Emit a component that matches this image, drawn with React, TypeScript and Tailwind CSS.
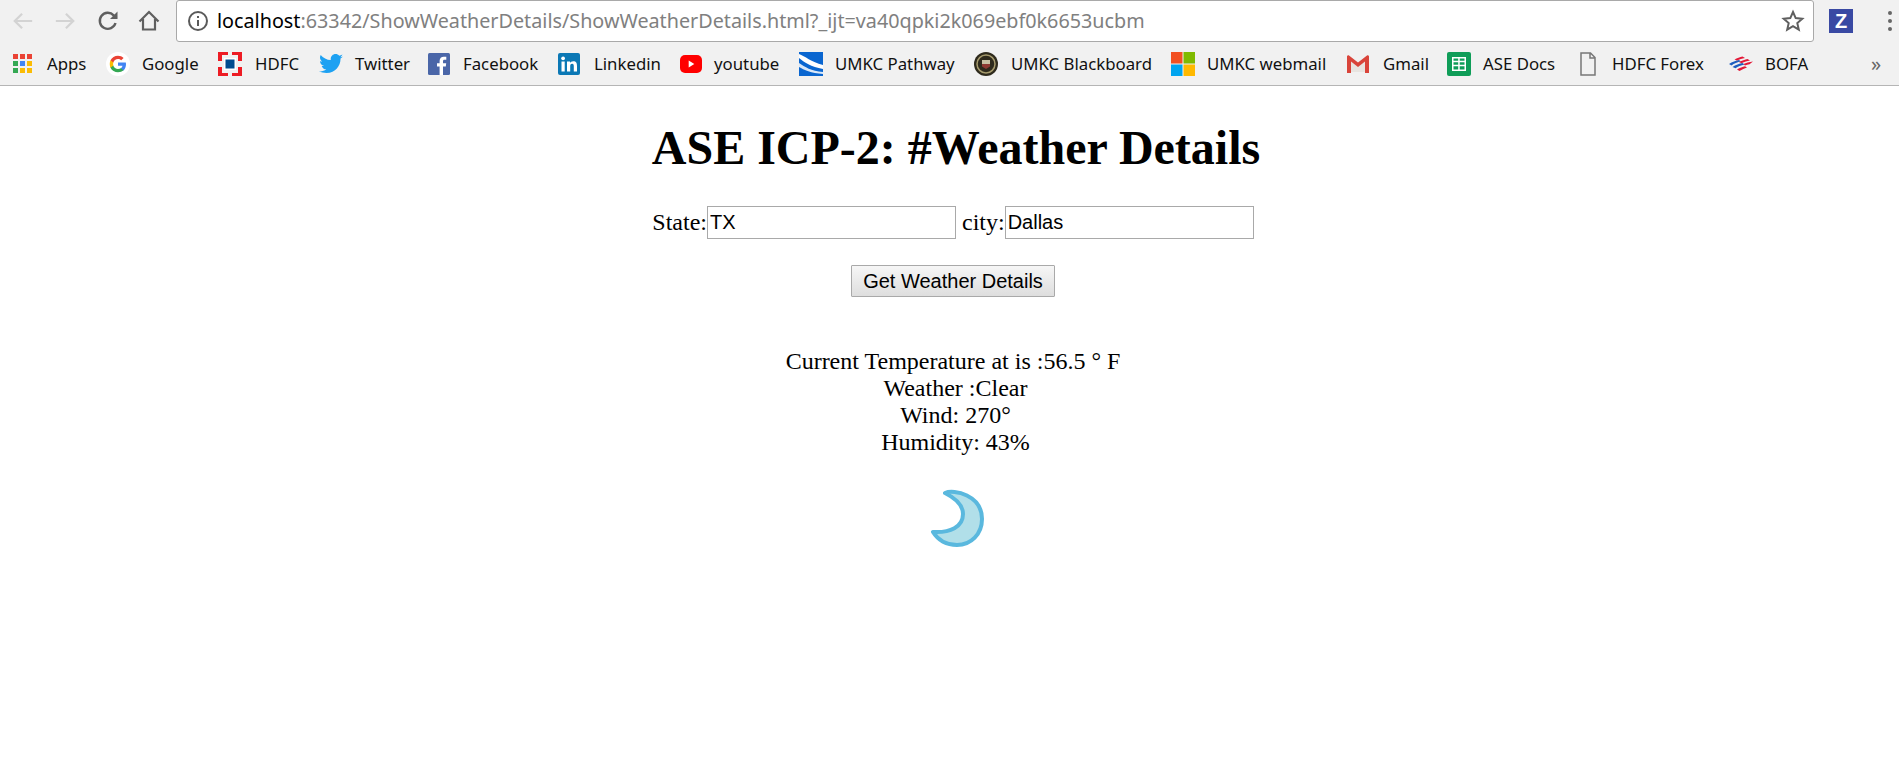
import type { ReactNode } from "react";

type Bookmark = { label: string; icon: ReactNode; itemClass: string; boxClass: string };

const AppsIcon = () => (
  <svg width="20" height="20" viewBox="0 0 20 20">
    <rect x="0" y="0" width="5" height="5" fill="#ea4335" />
    <rect x="7" y="0" width="5" height="5" fill="#ea4335" />
    <rect x="14" y="0" width="5" height="5" fill="#ea4335" />
    <rect x="0" y="7" width="5" height="5" fill="#34a853" />
    <rect x="7" y="7" width="5" height="5" fill="#4285f4" />
    <rect x="14" y="7" width="5" height="5" fill="#fbbc05" />
    <rect x="0" y="14" width="5" height="5" fill="#34a853" />
    <rect x="7" y="14" width="5" height="5" fill="#fbbc05" />
    <rect x="14" y="14" width="5" height="5" fill="#fbbc05" />
  </svg>
);

const GoogleIcon = () => (
  <svg width="24" height="24" viewBox="0 0 24 24">
    <circle cx="12" cy="12" r="12" fill="#fff" />
    <path d="M20 12.200c0-.6-.1-1.200-.2-1.700H12v3.300h4.500c-.2 1-.8 1.900-1.700 2.500v2.100h2.700c1.600-1.500 2.500-3.600 2.500-6.200z" fill="#4285f4" />
    <path d="M12 20.300c2.300 0 4.200-.8 5.500-2l-2.700-2.100c-.7.500-1.700.8-2.800.8-2.200 0-4.100-1.500-4.700-3.500H4.500v2.200c1.400 2.800 4.200 4.600 7.500 4.600z" fill="#34a853" />
    <path d="M7.300 13.500c-.3-1-.3-2.100 0-3.100V8.200H4.500c-1 1.900-1 5.600 0 7.500l2.800-2.200z" fill="#fbbc05" />
    <path d="M12 7c1.200 0 2.300.4 3.200 1.300l2.400-2.400C16.100 4.500 14.200 3.700 12 3.700c-3.300 0-6.100 1.800-7.500 4.500l2.800 2.200C7.900 8.500 9.800 7 12 7z" fill="#ea4335" />
  </svg>
);

const HdfcIcon = () => (
  <svg width="24" height="24" viewBox="0 0 24 24">
    <path d="M0 0h10v3H4v6H0zM14 0h10v9h-4V3h-6zM0 15h4v6h6v3H0zM20 15h4v9H14v-3h6z" fill="#ed1c24" />
    <rect x="6" y="6" width="12" height="12" fill="#fff" />
    <rect x="7.500" y="7.500" width="9" height="9" fill="#004c8f" />
  </svg>
);

const TwitterIcon = () => (
  <svg width="24" height="20" viewBox="0 0 24 20">
    <path d="M24 2.400c-.9.400-1.800.700-2.800.800 1-.6 1.800-1.600 2.200-2.700-1 .6-2 1-3.100 1.200C19.300.6 18 0 16.600 0c-2.700 0-4.900 2.200-4.900 4.900 0 .4 0 .8.100 1.100C7.700 5.800 4.100 3.900 1.700.9c-.4.700-.7 1.600-.7 2.500 0 1.700.9 3.200 2.200 4.100-.8 0-1.600-.2-2.200-.6v.1c0 2.400 1.700 4.400 3.900 4.800-.4.100-.8.200-1.300.2-.3 0-.6 0-.9-.1.600 2 2.400 3.400 4.600 3.400-1.700 1.300-3.800 2.100-6.100 2.100-.4 0-.8 0-1.200-.1C2.200 18.200 4.800 19 7.500 19c9.100 0 14-7.500 14-14v-.6c1-.7 1.800-1.500 2.500-2z" fill="#1da1f2" />
  </svg>
);

const FacebookIcon = () => (
  <svg width="22" height="22" viewBox="0 0 22 22">
    <rect width="22" height="22" rx="1.500" fill="#4a66a8" />
    <path d="M15 22v-8.500h2.800l.4-3.300H15V8.300c0-1 .3-1.600 1.600-1.600h1.700V3.800c-.3 0-1.300-.1-2.500-.1-2.500 0-4.200 1.500-4.200 4.300v2.200H9v3.300h2.600V22z" fill="#fff" />
  </svg>
);

const LinkedinIcon = () => (
  <svg width="22" height="22" viewBox="0 0 22 22">
    <rect width="22" height="22" rx="2" fill="#0b78b5" />
    <rect x="3.500" y="8.500" width="3.200" height="10" fill="#fff" />
    <circle cx="5.100" cy="5.300" r="1.900" fill="#fff" />
    <path d="M9 8.500h3v1.400c.5-.9 1.600-1.700 3.200-1.700 3.100 0 3.800 2 3.800 4.700v5.600h-3.200v-5c0-1.200 0-2.700-1.700-2.700s-1.900 1.300-1.900 2.600v5.100H9z" fill="#fff" />
  </svg>
);

const YoutubeIcon = () => (
  <svg width="22" height="18" viewBox="0 0 22 18">
    <rect width="22" height="18" rx="5" fill="#f00" />
    <path d="M8.700 5.500v7l5.600-3.500z" fill="#fff" />
  </svg>
);

const PathwayIcon = () => (
  <svg width="24" height="24" viewBox="0 0 24 24">
    <rect width="24" height="24" fill="#0a66d0" />
    <path d="M0 2c6 2 12 8 24 11v4C12 15 5 10 0 6z" fill="#fff" />
    <path d="M0 11c6 4 12 8 24 9v2C12 21 5 18 0 15z" fill="#fff" opacity="0.85" />
  </svg>
);

const BlackboardIcon = () => (
  <svg width="24" height="24" viewBox="0 0 24 24">
    <circle cx="12" cy="12" r="12" fill="#2e2a1c" />
    <circle cx="12" cy="12" r="9" fill="none" stroke="#a59a6c" strokeWidth="1.500" />
    <rect x="8" y="8" width="8" height="4" fill="#c9c2a4" />
    <path d="M8 12h8v2.500L12 17l-4-2.500z" fill="#8e3a32" />
  </svg>
);

const MicrosoftIcon = () => (
  <svg width="24" height="24" viewBox="0 0 24 24">
    <rect width="11.500" height="11.500" fill="#f25022" />
    <rect x="12.500" width="11.500" height="11.500" fill="#7fba00" />
    <rect y="12.500" width="11.500" height="11.500" fill="#00a4ef" />
    <rect x="12.500" y="12.500" width="11.500" height="11.500" fill="#ffb900" />
  </svg>
);

const GmailIcon = () => (
  <svg width="22" height="18" viewBox="0 0 22 18">
    <path d="M2 1l9 7 9-7v16H2z" fill="#e8e4e0" />
    <path d="M0 1.500C0 .5 1.200-.2 2 .4l9 7 9-7c.8-.6 2 .1 2 1.100V18h-4V6.500L11 12 4 6.500V18H0z" fill="#d9443a" />
  </svg>
);

const SheetsIcon = () => (
  <svg width="24" height="24" viewBox="0 0 24 24">
    <rect width="24" height="24" rx="2" fill="#0f9d58" />
    <path d="M5 5h14v14H5zM6.500 6.500v2.300h4.700V6.500zm6.200 0v2.300h4.800V6.500zM6.500 10.300v2.400h4.700v-2.400zm6.200 0v2.400h4.800v-2.400zM6.500 14.200v3.300h4.700v-3.300zm6.200 0v3.300h4.800v-3.300z" fill="#fff" fillRule="evenodd" />
  </svg>
);

const PageIcon = () => (
  <svg width="16" height="24" viewBox="0 0 16 24">
    <path d="M1 1h9.500L15 5.500V23H1zM10 1v5h5" fill="none" stroke="#777" strokeWidth="1.500" />
  </svg>
);

const BofaIcon = () => (
  <svg width="24" height="16" viewBox="0 0 24 16">
    <path d="M0 8C3 6 7 4.500 10 4l2 1.500C8.500 6 5 7.500 2.500 9.500z" fill="#1f5fbf" />
    <path d="M3.500 11c3-2 7-3.500 10-4l2 1.500c-3.500.7-6.500 2-9 3.700z" fill="#1f5fbf" />
    <path d="M5.500 3.500C8 2 11 1 13.500.5L16 2c-3 .5-5.500 1.200-8 2.500z" fill="#e31837" />
    <path d="M10 6c3-1.500 6-2.500 8.500-3L21 4.500c-3 .4-5.500 1.200-8.500 2.700z" fill="#e31837" />
    <path d="M14.500 8c2.500-1.200 5.500-2 9.500-2.500l-3.500 2.800c-1.500.2-3 .6-4.500 1.200z" fill="#e31837" />
    <path d="M8 13.500c3-1.600 5.500-2.600 8-3.200l2 1.200c-2.500.7-5 1.900-7.500 3.500z" fill="#e31837" />
  </svg>
);

const bookmarks: Bookmark[] = [
  { label: "Apps", icon: <AppsIcon />, itemClass: "w-[93px]", boxClass: "w-[34px]" },
  { label: "Google", icon: <GoogleIcon />, itemClass: "w-[112px]", boxClass: "w-[36px]" },
  { label: "HDFC", icon: <HdfcIcon />, itemClass: "w-[101px]", boxClass: "w-[37px]" },
  { label: "Twitter", icon: <TwitterIcon />, itemClass: "w-[109px]", boxClass: "w-[36px]" },
  { label: "Facebook", icon: <FacebookIcon />, itemClass: "w-[130px]", boxClass: "w-[35px]" },
  { label: "Linkedin", icon: <LinkedinIcon />, itemClass: "w-[122px]", boxClass: "w-[36px]" },
  { label: "youtube", icon: <YoutubeIcon />, itemClass: "w-[119px]", boxClass: "w-[34px]" },
  { label: "UMKC Pathway", icon: <PathwayIcon />, itemClass: "w-[175px]", boxClass: "w-[36px]" },
  { label: "UMKC Blackboard", icon: <BlackboardIcon />, itemClass: "w-[197px]", boxClass: "w-[37px]" },
  { label: "UMKC webmail", icon: <MicrosoftIcon />, itemClass: "w-[176px]", boxClass: "w-[36px]" },
  { label: "Gmail", icon: <GmailIcon />, itemClass: "w-[100px]", boxClass: "w-[36px]" },
  { label: "ASE Docs", icon: <SheetsIcon />, itemClass: "w-[133px]", boxClass: "w-[36px]" },
  { label: "HDFC Forex", icon: <PageIcon />, itemClass: "w-[149px]", boxClass: "w-[32px]" },
  { label: "BOFA", icon: <BofaIcon />, itemClass: "w-[142px]", boxClass: "w-[36px]" },
];

export default function App() {
  return (
    <div className="min-h-[762px] bg-white font-['Liberation_Serif',serif] text-black">
      <div className="h-[86px] border-b border-[#b5b5b5] bg-[#f1f1f1] font-['Noto_Sans',sans-serif]">
        <div className="flex h-[43px] items-start">
          <div className="flex h-[41px] w-[176px] items-center pl-[12px]">
            <svg width="22" height="22" viewBox="0 0 24 24" fill="none" stroke="#d3d3d3" strokeWidth="2.400">
              <path d="M22 12H3M11 4l-8 8 8 8" />
            </svg>
            <svg className="ml-[20px]" width="22" height="22" viewBox="0 0 24 24" fill="none" stroke="#d3d3d3" strokeWidth="2.400">
              <path d="M2 12h19M13 4l8 8-8 8" />
            </svg>
            <svg className="ml-[20px]" width="24" height="24" viewBox="0 0 24 24" fill="none" stroke="#5f5f5f" strokeWidth="2.400">
              <path d="M19.500 14a8 8 0 1 1-1.800-7.600L20.500 9" />
              <path d="M21.500 2.500V10h-7.500" fill="#5f5f5f" stroke="none" />
            </svg>
            <svg className="ml-[17px]" width="24" height="24" viewBox="0 0 24 24" fill="none" stroke="#5f5f5f" strokeWidth="2.200">
              <path d="M2.500 12.500L12 3l9.500 9.500M6 10v10.500h12V10" />
            </svg>
          </div>
          <div className="flex h-[42px] w-[1638px] items-center rounded-[3px] border border-[#a9a9a9] bg-white pl-[9px] pr-[8px]">
            <svg width="24" height="24" viewBox="0 0 24 24" fill="none" stroke="#5a5a5a" strokeWidth="2">
              <circle cx="12" cy="12" r="9" />
              <path d="M12 11v6M12 7v2" />
            </svg>
            <div className="ml-[7px] flex-1 text-[19.75px] whitespace-nowrap text-[#808080]">
              <span className="text-black">localhost</span>:63342/ShowWeatherDetails/ShowWeatherDetails.html?_ijt=va40qpki2k069ebf0k6653ucbm
            </div>
            <svg width="24" height="24" viewBox="0 0 24 24" fill="none" stroke="#5f5f5f" strokeWidth="2">
              <path d="M12 3l2.700 6.100 6.600.6-5 4.400 1.500 6.500L12 17.200 6.200 20.600l1.500-6.500-5-4.400 6.600-.6z" />
            </svg>
          </div>
          <div className="flex h-[41px] flex-1 items-center pl-[15px]">
            <div className="flex h-[24px] w-[24px] items-center justify-center bg-[#3949a3] font-['Liberation_Sans',sans-serif] text-[20px] font-bold text-white">Z</div>
            <div className="ml-[35px] flex flex-col gap-[4px]">
              <div className="h-[4px] w-[4px] rounded-full bg-[#666]" />
              <div className="h-[4px] w-[4px] rounded-full bg-[#666]" />
              <div className="h-[4px] w-[4px] rounded-full bg-[#666]" />
            </div>
          </div>
        </div>
        <div className="flex h-[42px] items-center pl-[13px] text-[16.8px] text-[#111]">
          {bookmarks.map((b) => (
            <div key={b.label} className={`flex items-center ${b.itemClass}`}>
              <div className={`flex shrink-0 justify-start ${b.boxClass}`}>{b.icon}</div>
              <div className="whitespace-nowrap">{b.label}</div>
            </div>
          ))}
          <div className="text-[20px] leading-none text-[#666]">»</div>
        </div>
      </div>

      <div className="flex flex-col items-center pl-[7px] text-[24px] leading-[27px]">
        <h1 className="mt-[34px] pl-[6px] text-[48px] leading-[55px] font-bold">ASE ICP-2: #Weather Details</h1>
        <div className="mt-[31px] flex items-center">
          <span>State:</span>
          <input
            readOnly
            value="TX"
            className="h-[33px] w-[249px] border border-[#a9a9a9] px-[2px] font-['Liberation_Sans',sans-serif] text-[20px]"
          />
          <span className="ml-[6px]">city:</span>
          <input
            readOnly
            value="Dallas"
            className="h-[33px] w-[249px] border border-[#a9a9a9] px-[2px] font-['Liberation_Sans',sans-serif] text-[20px]"
          />
        </div>
        <button className="mt-[26px] h-[32px] w-[204px] rounded-[1px] border border-[#a9a9a9] bg-gradient-to-b from-[#f6f6f6] to-[#dedede] font-['Liberation_Sans',sans-serif] text-[20px]">
          Get Weather Details
        </button>
        <div className="mt-[51px] text-center">
          <div>Current Temperature at is :56.5 ° F</div>
          <div className="pl-[5px]">Weather :Clear</div>
          <div className="pl-[5px]">Wind: 270°</div>
          <div className="pl-[5px]">Humidity: 43%</div>
        </div>
        <svg className="mt-[33px] ml-[7px]" width="54" height="58" viewBox="0 0 54 58">
          <path
            d="M15 4C24 0 52 6 52 30C52 45 41 56 27 56C16 56 8 51 3 43C20 44 33 38 33 25C33 16 25 9 15 4Z"
            fill="#b1dfe9"
            stroke="#5ab8de"
            strokeWidth="4"
            strokeLinejoin="round"
          />
        </svg>
      </div>
    </div>
  );
}
